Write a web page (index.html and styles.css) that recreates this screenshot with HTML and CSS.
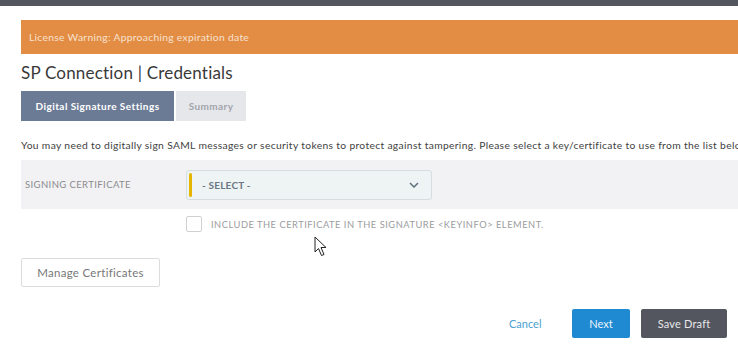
FILE: index.html
```html
<!DOCTYPE html>
<html>
<head>
<meta charset="utf-8">
<link rel="stylesheet" href="styles.css">
</head>
<body>
<div class="topbar"></div>
<div class="page">
  <div class="warning">License Warning: Approaching expiration date</div>
  <h1 class="title">SP Connection | Credentials</h1>
  <div class="tabs">
    <div class="tab active">Digital Signature Settings</div>
    <div class="tab">Summary</div>
  </div>
  <p class="desc">You may need to digitally sign SAML messages or security tokens to protect against tampering. Please select a key/certificate to use from the list below.</p>
  <div class="field-row">
    <div class="field-label">SIGNING CERTIFICATE</div>
    <div class="select">
      <span class="select-text">- SELECT -</span>
      <svg class="chevron" width="10" height="6" viewBox="0 0 10 6"><path d="M1 1 L5 5 L9 1" fill="none" stroke="#5d6f7e" stroke-width="1.5"/></svg>
    </div>
  </div>
  <div class="check-row">
    <span class="checkbox"></span>
    <span class="check-label">INCLUDE THE CERTIFICATE IN THE SIGNATURE &lt;KEYINFO&gt; ELEMENT.</span>
  </div>
  <button class="btn-manage">Manage Certificates</button>
  <div class="footer">
    <span class="cancel">Cancel</span>
    <button class="btn-next">Next</button>
    <button class="btn-draft">Save Draft</button>
  </div>
</div>
<svg class="cursor" width="14" height="21" viewBox="0 0 14 21"><path d="M1 1 L1 16 L4.5 12.5 L7.5 19.5 L10 18.5 L7 11.5 L12 11.5 Z" fill="#fff" stroke="#222" stroke-width="1" stroke-linejoin="round"/></svg>
</body>
</html>
```

FILE: styles.css
```css
html, body {
  margin: 0;
  padding: 0;
  background: #fff;
  overflow: hidden;
  width: 738px;
  height: 353px;
}
body {
  font-family: Lato, "Open Sans", sans-serif;
  color: #3b3b3b;
  position: relative;
}
.topbar {
  height: 6px;
  background: #53565e;
}
.page {
  padding: 14px 0 0 21px;
}
.warning {
  height: 34px;
  background: #e38c43;
  color: #f7e2cf;
  font-size: 10.3px;
  line-height: 34px;
  padding-left: 8px;
  white-space: nowrap;
  letter-spacing: 0.3px;
}
.title {
  margin: 8px 0 0 0;
  font-size: 17px;
  font-weight: 400;
  line-height: 22px;
  color: #3a3a3a;
  letter-spacing: 0.2px;
}
.tabs {
  display: flex;
  gap: 2px;
  margin-top: 7px;
}
.tab {
  height: 30px;
  line-height: 30px;
  font-size: 10px;
  font-weight: 700;
  background: #e6e7eb;
  color: #a3a5ad;
  width: 70px;
  text-align: center;
  letter-spacing: 0.4px;
}
.tab.active {
  background: #6b7b95;
  color: #fff;
  width: 153px;
  letter-spacing: 0.45px;
}
.desc {
  margin: 18px 0 0 0;
  font-size: 10.3px;
  line-height: 12px;
  white-space: nowrap;
  color: #3f3f3f;
  letter-spacing: 0.33px;
}
.field-row {
  margin-top: 9px;
  height: 49px;
  background: #f2f2f4;
  display: flex;
  align-items: center;
}
.field-label {
  width: 161px;
  padding-left: 4px;
  font-size: 9.5px;
  color: #8a8a8e;
  letter-spacing: 0.4px;
}
.select {
  width: 244px;
  height: 28px;
  background: #eef3f4;
  border: 1px solid #d6dde0;
  border-radius: 3px;
  display: flex;
  align-items: center;
  position: relative;
  box-sizing: content-box;
}
.select::before {
  content: "";
  width: 3px;
  height: 24px;
  background: #e6b500;
  border-radius: 1.5px;
  margin-left: 2px;
}
.select-text {
  margin-left: 10px;
  font-size: 10px;
  font-weight: 700;
  color: #6a7784;
  letter-spacing: 0.2px;
}
.chevron {
  margin-left: auto;
  margin-right: 12px;
}
.check-row {
  display: flex;
  align-items: center;
  margin-top: 7px;
  padding-left: 165px;
  height: 16px;
}
.checkbox {
  width: 14px;
  height: 14px;
  border: 1px solid #d0d0d4;
  border-radius: 2px;
  background: #fff;
}
.check-label {
  margin-left: 9px;
  font-size: 9.3px;
  color: #9c9ca0;
  letter-spacing: 0.52px;
}
.btn-manage {
  display: block;
  margin-top: 26px;
  width: 139px;
  height: 29px;
  background: #fff;
  border: 1px solid #dcdcdf;
  border-radius: 2px;
  font-family: Lato, "Open Sans", sans-serif;
  font-size: 11.5px;
  color: #777;
  padding: 0;
  letter-spacing: 0.3px;
}
.footer {
  display: flex;
  align-items: center;
  margin-top: 22px;
  padding-left: 488px;
}
.cancel {
  font-size: 11px;
  color: #4b9fd1;
  width: 35px;
}
.btn-next, .btn-draft {
  height: 29px;
  border: none;
  border-radius: 2px;
  font-family: Lato, "Open Sans", sans-serif;
  font-size: 11px;
  padding: 0;
}
.btn-next {
  margin-left: 28px;
  width: 58px;
  background: #1f8ad1;
  color: #eaf4fb;
}
.btn-draft {
  margin-left: 11px;
  width: 86px;
  background: #53565e;
  color: #e8e8ea;
  letter-spacing: 0.2px;
}
.cursor {
  position: absolute;
  left: 314px;
  top: 236px;
}
```
